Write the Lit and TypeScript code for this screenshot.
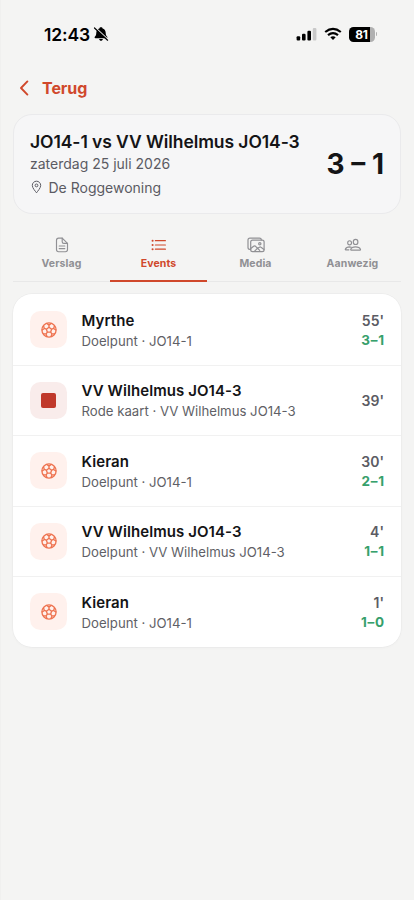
import { LitElement, html, css, svg, nothing } from "lit";
import { customElement, property } from "lit/decorators.js";
import { classMap } from "lit/directives/class-map.js";

type MatchEvent = {
  kind: "goal" | "red";
  name: string;
  detail: string;
  minute: string;
  score?: string;
};

const EVENTS: MatchEvent[] = [
  { kind: "goal", name: "Myrthe", detail: "Doelpunt · JO14-1", minute: "55'", score: "3–1" },
  { kind: "red", name: "VV Wilhelmus JO14-3", detail: "Rode kaart · VV Wilhelmus JO14-3", minute: "39'" },
  { kind: "goal", name: "Kieran", detail: "Doelpunt · JO14-1", minute: "30'", score: "2–1" },
  { kind: "goal", name: "VV Wilhelmus JO14-3", detail: "Doelpunt · VV Wilhelmus JO14-3", minute: "4'", score: "1–1" },
  { kind: "goal", name: "Kieran", detail: "Doelpunt · JO14-1", minute: "1'", score: "1–0" },
];

const docIcon = html`<svg width="18" height="18" viewBox="0 0 18 18" fill="none" stroke="currentColor" stroke-width="1.15" stroke-linecap="round" stroke-linejoin="round">
  <path d="M9.2 2.1H5.6Q3.5 2.1 3.5 4.2V13.6Q3.5 15.7 5.6 15.7H12.4Q14.5 15.7 14.5 13.6V7.4Z"/>
  <path d="M9.2 2.1V5.8Q9.2 7.4 10.8 7.4H14.5M6.2 10H11.8M6.2 12.6H11.8"/></svg>`;
const listIcon = html`<svg width="18" height="18" viewBox="0 0 18 18" fill="none" stroke="currentColor" stroke-width="1.2" stroke-linecap="round">
  <path d="M5.4 4.7H15.4M5.4 9H15.4M5.4 13.2H15.4"/>
  <g fill="currentColor" stroke="none"><circle cx="2.6" cy="4.7" r="1.05"/><circle cx="2.6" cy="9" r="1.05"/><circle cx="2.6" cy="13.2" r="1.05"/></g></svg>`;
const mediaIcon = html`<svg width="18" height="18" viewBox="0 0 18 18" fill="none" stroke="currentColor" stroke-width="1.2" stroke-linecap="round" stroke-linejoin="round">
  <path d="M3.7 13.4H2.9Q1 13.4 1 11.5V4Q1 2.1 2.9 2.1H12.5Q14.3 2.1 14.4 4"/>
  <rect x="3.7" y="4.2" width="13.4" height="11.4" rx="1.9"/>
  <circle cx="12.8" cy="7.8" r="1.15"/>
  <path d="M3.8 12.5L6.6 10.2Q7.6 9.4 8.6 10.3L12.7 14.4M10.6 12.2L12.4 11.2Q13.2 10.7 14 11.3L17 13.4M7.4 15.4L10.6 12.2"/></svg>`;
const peopleIcon = html`<svg width="18" height="18" viewBox="0 0 18 18" fill="none" stroke="currentColor" stroke-width="1.15" stroke-linecap="round" stroke-linejoin="round">
  <ellipse cx="11.6" cy="5.9" rx="2.3" ry="2.6"/>
  <ellipse cx="5.6" cy="6.8" rx="1.9" ry="2.1"/>
  <path d="M7.1 14.1Q6.6 14.1 6.7 13.4Q7.5 10.9 11.5 10.9Q15.5 10.9 16.5 13.4Q16.6 14.1 16.1 14.1Z"/>
  <path d="M4.9 13.8H1.7Q1.2 13.8 1.3 13.2Q2.2 11 5.6 10.9Q6.6 10.9 7.3 11.2"/></svg>`;

const TABS = [
  { label: "Verslag", icon: docIcon },
  { label: "Events", icon: listIcon },
  { label: "Media", icon: mediaIcon },
  { label: "Aanwezig", icon: peopleIcon },
];

const spokes = [0, 72, 144, 216, 288].map(
  (a) => svg`<g transform="rotate(${a} 9 9)"><path d="M9 6.3V4.1M6.5 2.3L9 4.1L11.5 2.3"/></g>`
);
const ballIcon = html`<svg width="18" height="18" viewBox="0 0 18 18" fill="none" stroke="currentColor" stroke-width="1.3" stroke-linejoin="round">
  <circle cx="9" cy="9" r="7.1"/>
  <path d="M9 6.3L11.6 8.2L10.6 11.2H7.4L6.4 8.2Z"/>${spokes}</svg>`;

@customElement("status-bar")
class StatusBar extends LitElement {
  static styles = css`
    :host { display: flex; justify-content: space-between; align-items: center; height: 68px; padding: 0 37px 0 43px; color: #000; }
    .left, .right { display: flex; align-items: center; }
    .time { font-size: 17.5px; font-weight: 600; letter-spacing: -0.15px; margin-right: 3px; }
    .right { gap: 7px; }
    svg { display: block; }
    .battery { display: flex; align-items: center; gap: 1px; }
    .cell { width: 26px; height: 15px; border-radius: 4.5px; background: linear-gradient(90deg, #000 81%, #b0b0b0 81%); color: #fff; font-size: 12px; font-weight: 700; line-height: 15px; text-align: center; letter-spacing: -0.2px; }
    .tip { width: 1.5px; height: 4px; border-radius: 0 2px 2px 0; background: #b0b0b0; }
  `;
  render() {
    return html`
      <div class="left">
        <span class="time">12:43</span>
        <svg width="16" height="16" viewBox="0 0 16 16">
          <path d="M8 1.2C9 1.2 9.5 1.8 9.6 2.4C11.5 3 12.6 4.5 12.7 6.7C12.8 9 13.2 9.7 14.2 10.8C14.7 11.5 14.3 12.2 13.6 12.2H2.4C1.7 12.2 1.3 11.5 1.8 10.8C2.8 9.7 3.2 9 3.3 6.7C3.4 4.5 4.5 3 6.4 2.4C6.5 1.8 7 1.2 8 1.2ZM6 13.1H10Q9.5 14.9 8 14.9Q6.5 14.9 6 13.1Z"/>
          <path d="M2.2 1.4L15 13.4" stroke="#f4f4f3" stroke-width="1.3"/>
          <path d="M1.5 2L14.6 14.2" stroke="#000" stroke-width="1.2" stroke-linecap="round"/>
        </svg>
      </div>
      <div class="right">
        <svg width="21" height="14" viewBox="0 0 21 14">
          <rect x="0.6" y="9.2" width="3.6" height="4.4" rx="1.1"/>
          <rect x="6" y="6.8" width="3.6" height="6.8" rx="1.1"/>
          <rect x="11.4" y="3.8" width="3.6" height="9.8" rx="1.1"/>
          <rect x="16.8" y="1" width="3.6" height="12.6" rx="1.1" fill="#c9c9c9"/>
        </svg>
        <svg width="18" height="14" viewBox="0 0 18 14" fill="none" stroke="#000" stroke-width="2.2">
          <path d="M1.2 5Q9-1.4 16.8 5M4 8.1Q9 4 14 8.1"/>
          <path d="M6.3 10.2Q9 8.2 11.7 10.2L9 13Z" fill="#000" stroke="none"/>
        </svg>
        <div class="battery"><div class="cell">81</div><div class="tip"></div></div>
      </div>`;
  }
}

@customElement("match-card")
class MatchCard extends LitElement {
  static styles = css`
    :host { display: flex; align-items: center; justify-content: space-between; box-sizing: border-box; height: 100px; padding: 0 16px; border: 1px solid #eaeaec; border-radius: 19px; background: #f6f6f7; }
    .info { padding-top: 2px; }
    .title { font-size: 17.5px; font-weight: 600; line-height: 22px; letter-spacing: -0.08px; color: #141416; }
    .meta { display: flex; align-items: center; font-size: 14px; line-height: 22px; color: #5b5b63; }
    .place { margin-top: 2px; }
    .pin { margin: 0 5.5px 3px 0; }
    .score { font-size: 28px; font-weight: 700; color: #141416; white-space: nowrap; }
  `;
  render() {
    return html`
      <div class="info">
        <div class="title">JO14-1 vs VV Wilhelmus JO14-3</div>
        <div class="meta">zaterdag 25 juli 2026</div>
        <div class="meta place">
          <svg class="pin" width="13" height="14" viewBox="0 0 13 14" fill="none" stroke="currentColor" stroke-width="1">
            <path d="M6.5 12.8C5.4 11.2 2.3 8.1 2.3 5.4A4.2 4.2 0 0 1 10.7 5.4C10.7 8.1 7.6 11.2 6.5 12.8Z" stroke-linejoin="round"/>
            <circle cx="6.5" cy="5.4" r="1.4"/>
          </svg>De Roggewoning
        </div>
      </div>
      <div class="score">3 – 1</div>`;
  }
}

@customElement("tab-strip")
class TabStrip extends LitElement {
  static styles = css`
    :host { display: grid; grid-template-columns: repeat(4, 1fr); height: 55px; border-bottom: 1px solid #e8e8e8; }
    .tab { display: flex; flex-direction: column; align-items: center; box-sizing: border-box; height: 56px; padding-top: 10px; color: #909094; font-size: 10.5px; font-weight: 700; line-height: 14px; letter-spacing: 0.12px; gap: 3px; border-bottom: 2px solid transparent; }
    .active { color: #d0482b; border-color: #d0482b; }
    svg { display: block; }
  `;
  render() {
    return TABS.map(
      (t) => html`<div class=${classMap({ tab: true, active: t.label === "Events" })}>${t.icon}<span>${t.label}</span></div>`
    );
  }
}

@customElement("event-row")
class EventRow extends LitElement {
  @property({ attribute: false }) event!: MatchEvent;
  static styles = css`
    :host { display: flex; align-items: center; box-sizing: border-box; height: 70.5px; padding: 0 17px; }
    .tile { display: grid; place-items: center; flex: none; width: 37px; height: 37px; margin-right: 14.5px; border-radius: 10.5px; background: #fff1ed; color: #ee7350; }
    .tile.red { background: #f9eceb; }
    .tile svg { display: block; }
    .card { width: 15px; height: 15px; border-radius: 2px; background: #c0392b; }
    .main { flex: 1; padding-top: 2px; }
    .name { font-size: 15px; font-weight: 600; line-height: 20px; letter-spacing: 0.08px; color: #141416; }
    .detail { font-size: 13.2px; line-height: 20px; color: #5f5f66; }
    .side { padding-top: 1px; text-align: right; }
    .minute { font-size: 14px; font-weight: 600; line-height: 19px; color: #5b5b63; }
    .score { font-size: 13.5px; font-weight: 700; line-height: 20px; letter-spacing: 0.7px; margin-right: -0.7px; color: #37a06c; }
  `;
  render() {
    const e = this.event;
    return html`
      <div class=${classMap({ tile: true, red: e.kind === "red" })}>
        ${e.kind === "red" ? html`<div class="card"></div>` : ballIcon}
      </div>
      <div class="main">
        <div class="name">${e.name}</div>
        <div class="detail">${e.detail}</div>
      </div>
      <div class="side">
        <div class="minute">${e.minute}</div>
        ${e.score ? html`<div class="score">${e.score}</div>` : nothing}
      </div>`;
  }
}

@customElement("app-root")
class AppRoot extends LitElement {
  static styles = css`
    :host { display: block; box-sizing: border-box; height: 900px; background: #f4f4f3; border-left: 1px solid #f0f0ef; font-family: Inter, "Liberation Sans", sans-serif; }
    .back { display: flex; align-items: center; height: 40px; padding-left: 17px; color: #d0482b; font-size: 16px; font-weight: 650; letter-spacing: -0.05px; }
    .back svg { margin-right: 11px; }
    .content { padding: 6px 13px 0 12px; }
    .tabs { margin-top: 12px; }
    .list { margin-top: 12.3px; border-radius: 19px; background: #fff; box-shadow: 0 0 0 0.5px #e8e8e8, 0 1px 3px rgba(0, 0, 0, 0.03); }
    .row + .row { box-shadow: inset 0 1px 0 #f1f1f1; }
  `;
  render() {
    return html`
      <status-bar></status-bar>
      <div class="back">
        <svg width="13" height="18" viewBox="0 0 13 18" fill="none" stroke="currentColor" stroke-width="1.9" stroke-linecap="round" stroke-linejoin="round"><path d="M9.4 2.4L3 9L9.4 15.6"/></svg>
        Terug
      </div>
      <div class="content">
        <match-card></match-card>
        <tab-strip class="tabs"></tab-strip>
        <div class="list">${EVENTS.map((e) => html`<event-row class="row" .event=${e}></event-row>`)}</div>
      </div>`;
  }
}
